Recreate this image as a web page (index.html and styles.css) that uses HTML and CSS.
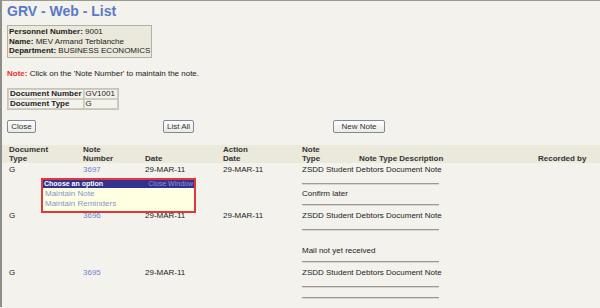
FILE: index.html
```html
<!DOCTYPE html>
<html>
<head>
<meta charset="utf-8">
<link rel="stylesheet" href="styles.css">
</head>
<body>
<div class="page">
  <h1 class="title">GRV - Web - List</h1>
  <div class="info">
    <div><b>Personnel Number:</b> 9001</div>
    <div><b>Name:</b> MEV Armand Terblanche</div>
    <div><b>Department:</b> BUSINESS ECONOMICS</div>
  </div>
  <p class="note"><span class="note-label">Note:</span> Click on the 'Note Number' to maintain the note.</p>
  <table class="doc">
    <tr><th>Document Number</th><td>GV1001</td></tr>
    <tr><th>Document Type</th><td>G</td></tr>
  </table>
  <div class="buttons">
    <button class="btn btn-close">Close</button>
    <button class="btn btn-list">List All</button>
    <button class="btn btn-new">New Note</button>
  </div>
  <table class="list">
    <colgroup>
      <col class="c1"><col class="c2"><col class="c3"><col class="c4"><col class="c5"><col class="c6"><col class="c7">
    </colgroup>
    <thead>
      <tr>
        <th>Document<br>Type</th>
        <th>Note<br>Number</th>
        <th>Date</th>
        <th>Action<br>Date</th>
        <th>Note<br>Type</th>
        <th class="desc">Note Type Description</th>
        <th>Recorded by</th>
      </tr>
    </thead>
    <tbody>
      <tr>
        <td>G</td>
        <td class="numcell"><a href="#">3697</a>
          <div class="popup">
            <div class="popup-head"><span>Choose an option</span><a href="#">Close Window</a></div>
            <div class="popup-body">
              <a href="#">Maintain Note</a>
              <a href="#">Maintain Reminders</a>
            </div>
          </div>
        </td>
        <td>29-MAR-11</td>
        <td>29-MAR-11</td>
        <td colspan="2" class="notes">
          <div class="ntext first">ZSDD Student Debtors Document Note</div>
          <hr>
          <div class="ntext">Confirm later</div>
          <hr>
        </td>
        <td></td>
      </tr>
      <tr>
        <td>G</td>
        <td><a href="#">3696</a></td>
        <td>29-MAR-11</td>
        <td>29-MAR-11</td>
        <td colspan="2" class="notes">
          <div class="ntext first">ZSDD Student Debtors Document Note</div>
          <hr>
          <div class="ntext gap">Mail not yet received</div>
          <hr>
        </td>
        <td></td>
      </tr>
      <tr>
        <td>G</td>
        <td><a href="#">3695</a></td>
        <td>29-MAR-11</td>
        <td></td>
        <td colspan="2" class="notes">
          <div class="ntext first">ZSDD Student Debtors Document Note</div>
          <hr>
          <div class="ntext empty"></div>
          <hr>
        </td>
        <td></td>
      </tr>
    </tbody>
  </table>
</div>
</body>
</html>
```
FILE: styles.css
```css
html, body {
  margin: 0;
  padding: 0;
  background: #f3f2ec;
}
body {
  font-family: "Liberation Sans", Arial, sans-serif;
  font-size: 8px;
  color: #222;
}
.page {
  border-top: 1px solid #9a9a94;
  border-left: 2px solid #8e8e88;
  min-height: 307px;
  box-sizing: border-box;
  padding: 0 0 0 5px;
}
.title {
  margin: 2px 0 0 0;
  font-size: 14px;
  line-height: 16px;
  font-weight: bold;
  color: #5a79c8;
}
.info {
  margin-top: 6px;
  width: 142px;
  border: 1px solid #b4b1a4;
  background: #ebe8dc;
  padding: 1px 0 1px 1px;
  line-height: 9.6px;
  white-space: nowrap;
}
.note {
  margin: 11px 0 0 0;
  line-height: 10px;
}
.note-label {
  color: #e8322e;
  font-weight: bold;
}
.doc {
  margin-top: 9px;
  border-collapse: separate;
  border-spacing: 0;
  border: 1px solid #c7c4b8;
}
.doc th, .doc td {
  border: 1px solid #cfccc0;
  padding: 0 1px;
  line-height: 8px;
  text-align: left;
  white-space: nowrap;
}
.doc th { width: 68px; }
.doc td { width: 30px; }
.buttons {
  display: flex;
  margin-top: 10px;
  height: 13px;
}
.btn {
  font-family: "Liberation Sans", Arial, sans-serif;
  font-size: 8px;
  color: #333;
  height: 13px;
  padding: 0 2px;
  line-height: 11px;
  white-space: nowrap;
  background: linear-gradient(#fdfdfb, #ebeae4);
  border: 1px solid #7b8aa0;
  border-radius: 2px;
}
.btn-close { width: 29px; }
.btn-list { width: 31px; margin-left: 127px; }
.btn-new { width: 52px; margin-left: 139px; }
.list {
  margin-top: 12px;
  margin-left: -5px;
  width: 598px;
  border-collapse: collapse;
  table-layout: fixed;
}
.c1 { width: 81px; }
.c2 { width: 62px; }
.c3 { width: 78px; }
.c4 { width: 79px; }
.c5 { width: 57px; }
.c6 { width: 179px; }
.c7 { width: auto; }
.list thead tr {
  background: #ebe8dc;
}
.list th {
  text-align: left;
  vertical-align: bottom;
  font-weight: bold;
  line-height: 9px;
  padding: 0;
  color: #333;
}
.list th:first-child { padding-left: 7px; }
.list td:first-child { padding-left: 7px; }
.list td {
  vertical-align: top;
  padding: 1px 0 0 0;
  line-height: 10px;
}
.list tbody tr:first-child td { padding-top: 2px; }
.list a {
  color: #6f86cc;
  text-decoration: none;
}
.numcell { position: relative; }
.notes hr {
  width: 137px;
  margin: 0 0 4px 0;
  border: 0;
  border-top: 1px solid #9c9a92;
  border-bottom: 1px solid #d8d6ce;
  height: 0;
}
.ntext { padding-bottom: 5px; }
.ntext.first { padding-bottom: 8px; }
.ntext.gap { padding-top: 11px; }
.popup {
  position: absolute;
  left: -42px;
  top: 15px;
  width: 151px;
  border: 2px solid #e0363c;
  background: #ffffe2;
  z-index: 2;
  padding-bottom: 2px;
}
.popup-head {
  display: flex;
  justify-content: space-between;
  background: #33338f;
  color: #fff;
  font-weight: bold;
  font-size: 7px;
  line-height: 8px;
  padding: 0 1px 0 1px;
}
.popup-head a {
  color: #8e8ed8 !important;
  font-weight: normal;
}
.popup-body {
  padding: 1px 0 0 2px;
  display: flex;
  flex-direction: column;
}
.popup-body a {
  font-size: 8px;
  line-height: 10px;
  color: #7f93d2;
}
```
